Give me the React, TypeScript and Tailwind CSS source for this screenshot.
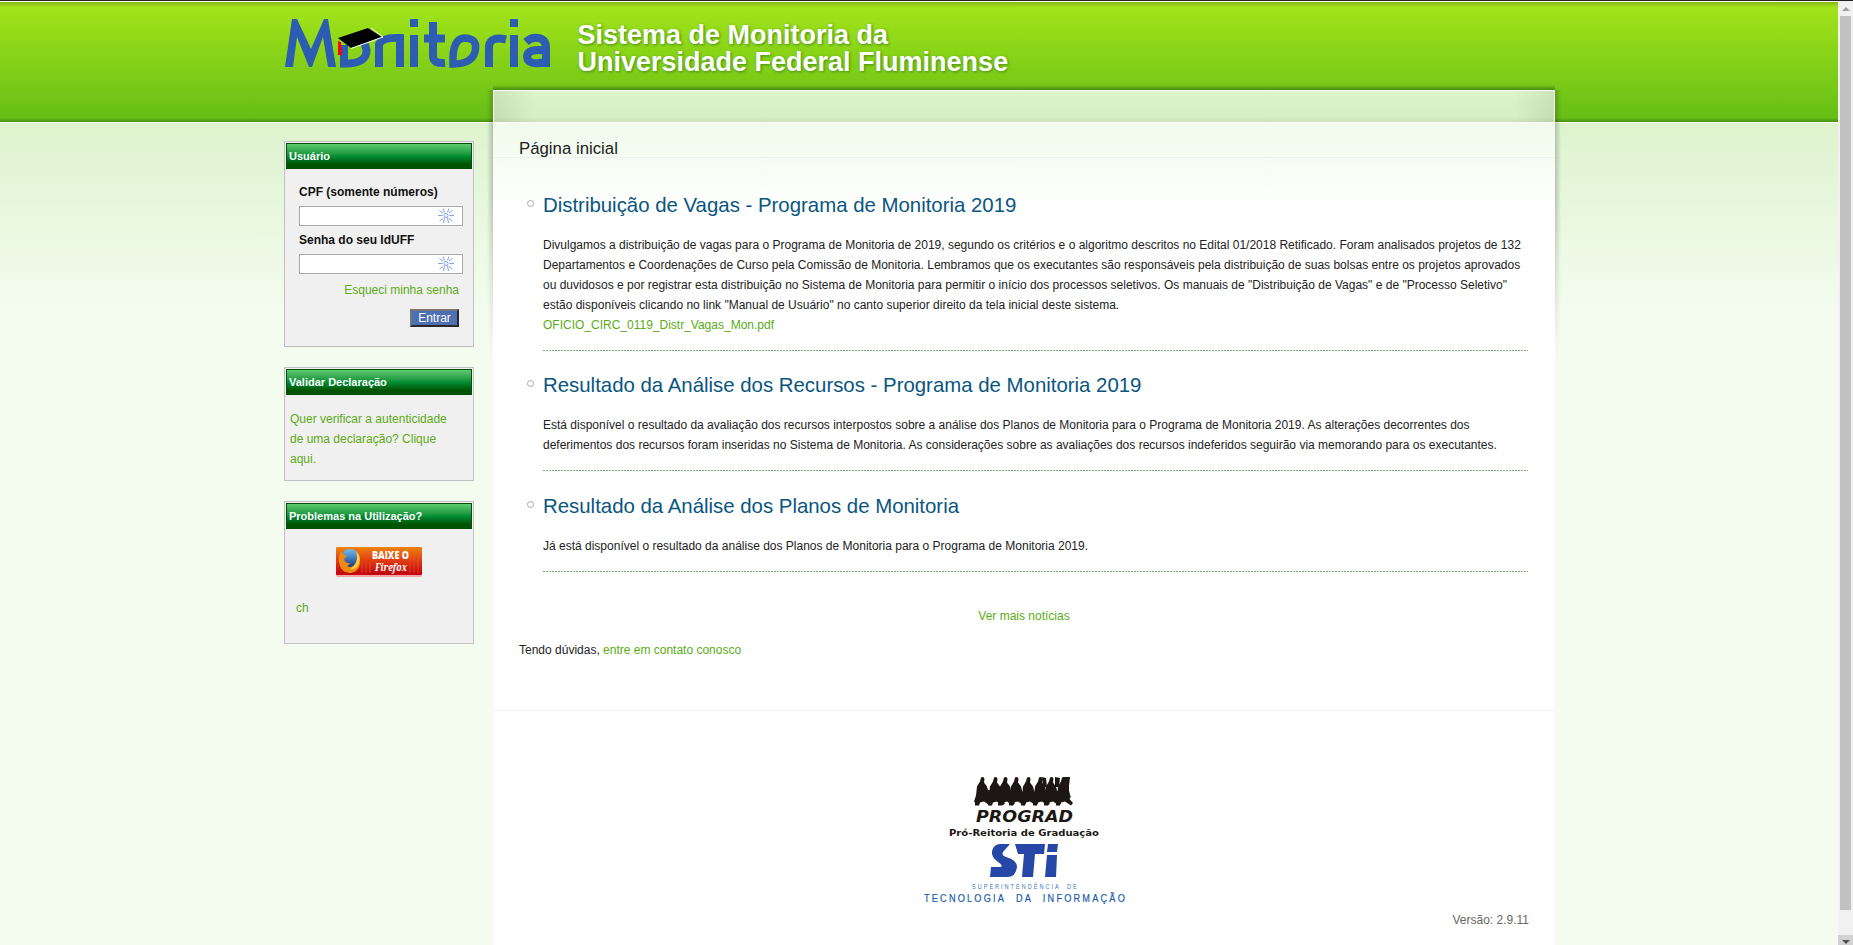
import React from "react";

function Spark() {
  return (
    <svg width="16" height="16" viewBox="0 0 16 16" fill="none" stroke="#7f9fe8" strokeWidth="1">
      <circle cx="8" cy="7.500" r="2" />
      <path d="M6.500 9.500L5.500 15M9.500 9.500L10.500 15M0 7.500h4.500M11.500 7.500H16M1.500 2.500l3.500 2.500M14.500 2.500L11 5M1.500 13L5 10.500M14.500 13L11 10.500M5 .5l1.500 4M11 .5l-1.500 4" />
    </svg>
  );
}

function Box({ title, className, children }: { title: string; className: string; children: React.ReactNode }) {
  return (
    <section className={`w-[190px] border border-[#c0c0c0] bg-[#f0f0f0] p-px ${className}`}>
      <h3 className="h-[26px] border border-[#005000] bg-linear-to-b from-[#5ccb72] via-[#009036] via-50% to-[#005400] to-85% pl-[2px] text-[11px] leading-[25px] font-bold text-white">{title}</h3>
      {children}
    </section>
  );
}

function Logo() {
  return (
    <svg className="h-[52px] w-[268px]" viewBox="284 17 268 52" role="img" aria-label="Monitoria">
      <path fill="#2d5cb3" d="M285 67L292 19H297L311 49L324 19H328L336 67H328L323 37L312 67H309L297 37L293 67Z" />
      <g fill="none" stroke="#2d5cb3">
        <path strokeWidth="8" d="M344 45V63.500Q367 64 366.500 50L364 41M379 67V44Q383 37 400 38V67" />
        <path strokeWidth="8" d="M414 35V67M433 22V56Q433 64 445 63M424 38.500H445" />
        <path strokeWidth="7.500" d="M453 64Q452 39 464 38Q477 38 475.500 49Q474 64 453 64Z" />
        <path strokeWidth="8" d="M489 67V46Q490 36 506 39.500M514 35V67M526 42Q532 36.500 538 38Q546 39 546 48V67M546 50.500Q527 48 527 57Q528 66 546 62" />
      </g>
      <path fill="#2d5cb3" d="M410 19h8v8h-8zM510 19h8v8h-8z" />
      <path fill="#f00" d="M338 41l3 1 1 13h-4z" />
      <path d="M338 38L368 28L382 37L351 48Z" fill="#000" />
      <path d="M371 28L383 37L351 48.500" fill="none" stroke="#fff" />
    </svg>
  );
}

function FirefoxBadge() {
  return (
    <svg className="mx-auto block h-[30px] w-[86px]" viewBox="0 0 86 30">
      <defs>
        <linearGradient id="badge" x2="0" y2="1">
          <stop stopColor="#ef8410" />
          <stop offset=".5" stopColor="#e03a12" />
          <stop offset="1" stopColor="#c0000f" />
        </linearGradient>
        <linearGradient id="globe" x2="0" y2="1">
          <stop stopColor="#6fbcf0" />
          <stop offset="1" stopColor="#102c80" />
        </linearGradient>
      </defs>
      <rect width="86" height="30" rx="2" fill="#f3a3a8" />
      <rect width="86" height="28" rx="1" fill="url(#badge)" />
      <path d="M26 14V26M30 12V26M34 15V26M74 9V26M78 6V26M82 10V26" stroke="#f06030" opacity=".6" />
      <circle cx="14" cy="12" r="10" fill="url(#globe)" />
      <path d="M5 4Q2 9 3 15Q5 27 15 26Q25 24 24 12Q23 7 20 4Q22 10 20 15Q17 22 11 19L15 16Q9 17 8 12L11 9Q7 8 5 4Z" fill="#ef8a12" />
      <path d="M24 12Q23 7 20 4Q24 16 14 22Q23 23 24 12Z" fill="#fbd13a" />
      <text x="36" y="12" textLength="37" lengthAdjust="spacingAndGlyphs" fill="#fff" className="font-['Open_Sans'] text-[11px] font-extrabold">BAIXE O</text>
      <text x="39" y="23.500" textLength="32" lengthAdjust="spacingAndGlyphs" fill="#fff" className="font-['Noto_Serif','Liberation_Serif',serif] text-[11.500px] font-bold italic">Firefox</text>
    </svg>
  );
}

const walkers = [0, 13, 23, 34, 46, 58, 69, 81];

function Prograd() {
  return (
    <svg className="h-[61px] w-[152px] overflow-visible" viewBox="948 776 152 61">
      <g fill="#1c1714">
        {walkers.map((x) => (
          <path key={x} transform={`translate(${x} 0)`} d="M981 777.500q3-1.500 3.500 1.500l-.5 3.500 3 4 2 8-1 4 4 4.500-2 2.500-6-4-4 1-1 3h-4l0-3-1-1 2-6 1-9 3-5z" />
        ))}
        <path d="M976 800L977 793L985 789L996 792L1060 791L1071 796L1069 800L1058 801L1052 797L1042 801L1032 798L1022 801L1010 798L1000 801L988 798L982 801Z" />
        <path d="M1042 777l4 1 1 9h-4zM1055 777l5 1-1 9h-4zM1064 777l6 0-1 9 0 9h-6z" />
      </g>
      <text x="976" y="822" textLength="97" lengthAdjust="spacingAndGlyphs" fill="#1c1714" className="font-['DejaVu_Sans'] text-[15.500px] font-bold italic">PROGRAD</text>
      <text x="949" y="836" textLength="150" lengthAdjust="spacingAndGlyphs" fill="#1c1714" className="font-['DejaVu_Sans'] text-[9.500px] font-bold">Pró-Reitoria de Graduação</text>
    </svg>
  );
}

function Sti() {
  return (
    <svg className="h-[66px] w-[206px]" viewBox="921 842 206 66">
      <g fill="#2646a8">
        <path d="M1000 844H1010L1003 852Q1001 855 1006 857Q1017 860 1017 867Q1016 877 1007 877H990L991 867H1001Q1003 865 998 862Q991 857 992 851Q994 844 1000 844Z" />
        <path d="M1015 844H1045L1044 854H1035L1033 877H1022L1024 854H1018ZM1048 844H1058L1057 852H1047ZM1047 855H1057L1056 877H1045Z" />
      </g>
      <g transform="translate(972 889) scale(.8 1)">
        <text textLength="131" fill="#3976bd" className="font-['Liberation_Sans'] text-[7px] [word-spacing:4px]">SUPERINTENDÊNCIA DE</text>
      </g>
      <g transform="translate(924 902) scale(.8 1)">
        <text textLength="251" fill="#185ca8" stroke="#185ca8" strokeWidth=".2" className="font-['Liberation_Sans'] text-[11.500px] [word-spacing:7px]">TECNOLOGIA DA INFORMAÇÃO</text>
      </g>
    </svg>
  );
}

function News({ title, height, children }: { title: string; height: string; children: React.ReactNode }) {
  return (
    <li className={`flex gap-[9px] ${height}`}>
      <span className="mt-[10px] h-[7px] w-[7px] shrink-0 rounded-full border border-[#aaa]" />
      <div className="flex grow flex-col">
        <h2 className="mb-[15px] text-[20.400px] leading-[30px] text-[#0a567f]">{title}</h2>
        <div className="w-[985px] grow text-[12px] leading-[20px] whitespace-nowrap">{children}</div>
        <div className="h-px bg-[repeating-linear-gradient(90deg,#76a97c_0_2px,#ffffff_2px_3px)]" />
      </div>
    </li>
  );
}

export default function App() {
  return (
    <div className="flex h-[945px] w-[1853px] overflow-hidden bg-[#f3fcef] font-['Liberation_Sans',Arial,sans-serif] text-[12px] text-[#222]">
      <div className="h-full w-[1838px] bg-linear-to-b from-[#dff3cf] from-[130px] to-[#f3fcef] to-[310px]">
        <div className="h-[123px] border-b border-white bg-[linear-gradient(to_bottom,#a5e619_0px,#67be17_118px,#478e0c_122px)]">
          <div className="h-px bg-[#222]" />
          <div className="h-px bg-white" />
          <div className="-mb-[5px] h-[5px] bg-linear-to-b from-[#83b51a] to-transparent" />
          <header className="ml-[284px] flex pt-[15px]">
            <Logo />
            <h1 className="ml-[25.500px] pt-[5px] text-[27px] leading-[27px] font-bold text-white [text-shadow:1px_1px_3px_#468a14]">Sistema de Monitoria da<br />Universidade Federal Fluminense</h1>
          </header>
        </div>
        <div className="relative -mt-[33px] ml-[284px] flex h-[855px] gap-[19px]">
          <aside className="pt-[51px]">
            <Box title="Usuário" className="h-[206px]">
              <form className="pt-[13px] pl-[13px] font-bold text-[#111]">
                <label className="block leading-[20px]">CPF (somente números)</label>
                <div className="mt-[4px] flex h-[20px] w-[164px] items-center justify-end border border-[#a9a9a9] bg-white pr-[8px]"><Spark /></div>
                <label className="mt-[4px] block leading-[20px]">Senha do seu IdUFF</label>
                <div className="mt-[4px] flex h-[20px] w-[164px] items-center justify-end border border-[#a9a9a9] bg-white pr-[8px]"><Spark /></div>
                <a className="mt-[6px] mr-[13px] block text-right leading-[20px] font-normal text-[#5cab17]">Esqueci minha senha</a>
                <button type="button" className="mt-[9px] mr-[13px] ml-auto block h-[18px] w-[49px] border-2 border-t-[#767676] border-r-[#2a2a2a] border-b-[#2a2a2a] border-l-[#767676] bg-[#4c70b2] leading-[14px] font-normal text-white">Entrar</button>
              </form>
            </Box>
            <Box title="Validar Declaração" className="mt-[20px] h-[114px]">
              <p className="pt-[14px] pl-[4px] leading-[20px] text-[#5cab17]">Quer verificar a autenticidade<br />de uma declaração? Clique<br />aqui.</p>
            </Box>
            <Box title="Problemas na Utilização?" className="mt-[20px] h-[143px]">
              <div className="pt-[18px] pr-px"><FirefoxBadge /></div>
              <p className="mt-[21px] pl-[10px] leading-[20px] text-[#5cab17]">ch</p>
            </Box>
          </aside>
          <main className="relative w-[1062px] bg-white">
            <div className="absolute top-0 -left-[6px] h-[270px] w-[6px] bg-linear-to-l from-[#0003] to-transparent [mask-image:linear-gradient(#000_40%,transparent)]" />
            <div className="absolute top-0 -right-[6px] h-[270px] w-[6px] bg-linear-to-r from-[#0003] to-transparent [mask-image:linear-gradient(#000_40%,transparent)]" />
            <div className="absolute -top-[5px] right-0 left-0 h-[5px] bg-linear-to-t from-[#2f6c06aa] to-transparent" />
            <div className="h-[32px] border border-b-0 border-white bg-[linear-gradient(90deg,#1b3b1018,transparent_40px,transparent_1020px,#1b3b1018),linear-gradient(#def4cc,#d7efc4_85%,#c9dfb9)]" />
            <div className="h-[35px] border-t border-white bg-linear-to-b from-[#f1faed] to-[#f5fcf1] pt-[12px] pl-[26px] text-[16.800px] leading-[28px]">Página inicial</div>
            <div className="h-[553px] border-t border-[#edf1eb] bg-linear-to-b from-[#f6fcf3] to-white to-[50px] pt-[32px]">
              <ul className="ml-[34px] w-[1001px]">
                <News title="Distribuição de Vagas - Programa de Monitoria 2019" height="h-[161px]">
                  Divulgamos a distribuição de vagas para o Programa de Monitoria de 2019, segundo os critérios e o algoritmo descritos no Edital 01/2018 Retificado. Foram analisados projetos de 132<br />
                  Departamentos e Coordenações de Curso pela Comissão de Monitoria. Lembramos que os executantes são responsáveis pela distribuição de suas bolsas entre os projetos aprovados<br />
                  ou duvidosos e por registrar esta distribuição no Sistema de Monitoria para permitir o início dos processos seletivos. Os manuais de "Distribuição de Vagas" e de "Processo Seletivo"<br />
                  estão disponíveis clicando no link "Manual de Usuário" no canto superior direito da tela inicial deste sistema.<br />
                  <a className="text-[#5cab17]">OFICIO_CIRC_0119_Distr_Vagas_Mon.pdf</a>
                </News>
                <li className="h-[19px]" />
                <News title="Resultado da Análise dos Recursos - Programa de Monitoria 2019" height="h-[101px]">
                  Está disponível o resultado da avaliação dos recursos interpostos sobre a análise dos Planos de Monitoria para o Programa de Monitoria 2019. As alterações decorrentes dos<br />
                  deferimentos dos recursos foram inseridas no Sistema de Monitoria. As considerações sobre as avaliações dos recursos indeferidos seguirão via memorando para os executantes.
                </News>
                <li className="h-[20px]" />
                <News title="Resultado da Análise dos Planos de Monitoria" height="h-[81px]">
                  Já está disponível o resultado da análise dos Planos de Monitoria para o Programa de Monitoria 2019.
                </News>
              </ul>
              <a className="mt-[34px] block text-center leading-[20px] text-[#5cab17]">Ver mais notícias</a>
              <p className="mt-[14px] ml-[26px] leading-[20px]">Tendo dúvidas, <a className="text-[#5cab17]">entre em contato conosco</a></p>
            </div>
            <footer className="flex flex-col items-center border-t border-[#eef0ea] pt-[65px]">
              <Prograd />
              <div className="mt-[5px]"><Sti /></div>
              <p className="mt-[2px] mr-[26px] self-end leading-[20px] text-[#666]">Versão: 2.9.11</p>
            </footer>
          </main>
        </div>
      </div>
      <div className="flex h-full w-[15px] flex-col items-center justify-between bg-[#f1f1f1]">
        <div className="flex h-[16px] w-full items-center justify-center border-t border-[#222] bg-[#f1f1f1]"><span className="border-x-4 border-b-4 border-x-transparent border-b-[#a0a0a0]" /></div>
        <div className="mb-[25px] w-[11px] grow bg-[#c1c1c1]" />
        <div className="flex h-[10px] w-full items-center justify-center bg-[#d2d2d2] pt-[3px]"><span className="border-x-4 border-t-4 border-x-transparent border-t-[#505050]" /></div>
      </div>
    </div>
  );
}
